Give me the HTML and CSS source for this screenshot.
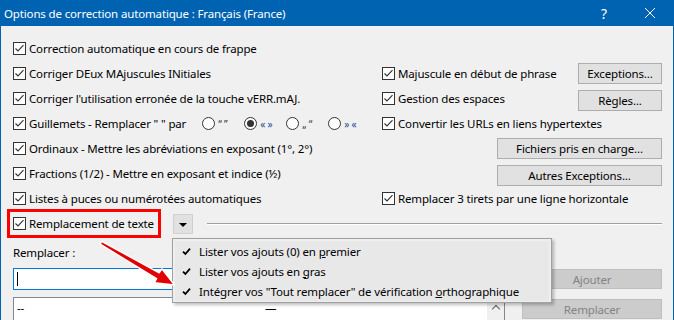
FILE: index.html
```html
<!DOCTYPE html>
<html lang="fr">

<head>
    <meta charset="UTF-8">
    <meta name="viewport" content="width=device-width, initial-scale=1.0">

    <title>Options de correction automatique</title>

    <link rel="stylesheet" href="styles.css">
</head>

<body>

    <svg class="defs" width="0" height="0">
        <symbol id="chk" viewBox="0 0 13 13">
            <rect x="0.5" y="0.5" width="12" height="12" fill="#fff" stroke="#333"/>
            <path d="M2.5 6.5 L5 9 L10.5 3.2" fill="none" stroke="#333" stroke-width="1.1"/>
        </symbol>
        <symbol id="radio" viewBox="0 0 13 13">
            <circle cx="6.5" cy="6.5" r="6" fill="#fff" stroke="#333"/>
        </symbol>
        <symbol id="radio-on" viewBox="0 0 13 13">
            <circle cx="6.5" cy="6.5" r="6" fill="#fff" stroke="#333"/>
            <circle cx="6.5" cy="6.5" r="3.5" fill="#333"/>
        </symbol>
        <symbol id="tick" viewBox="0 0 9 9">
            <path d="M1 4.6 L3.4 7 L8 1.6" fill="none" stroke="#000" stroke-width="1.8"/>
        </symbol>
    </svg>

    <div class="dialog">
        <div class="titlebar">
            <span class="title">Options de correction automatique : Français (France)</span>
            <span class="tb-btn help">?</span>
            <span class="tb-btn">
                <svg width="10" height="10" viewBox="0 0 10 10"><path d="M0 0 L10 10 M10 0 L0 10" stroke="#fff" stroke-width="1"/></svg>
            </span>
        </div>

        <div class="content">
            <div class="options">
                <label class="opt"><svg class="cb"><use href="#chk"/></svg>Correction automatique en cours de frappe</label>
                <div></div>

                <label class="opt"><svg class="cb"><use href="#chk"/></svg>Corriger DEux MAjuscules INitiales</label>
                <div class="opt-row">
                    <label class="opt"><svg class="cb"><use href="#chk"/></svg>Majuscule en début de phrase</label>
                    <button class="btn small">Exceptions...</button>
                </div>

                <label class="opt"><svg class="cb"><use href="#chk"/></svg>Corriger l'utilisation erronée de la touche vERR.mAJ.</label>
                <div class="opt-row">
                    <label class="opt"><svg class="cb"><use href="#chk"/></svg>Gestion des espaces</label>
                    <button class="btn small low">Règles...</button>
                </div>

                <div class="opt">
                    <svg class="cb"><use href="#chk"/></svg><span>Guillemets - Remplacer " " par</span>
                    <div class="quotes">
                        <span class="radio"><svg class="rb"><use href="#radio"/></svg><span class="q">“ ”</span></span>
                        <span class="radio"><svg class="rb"><use href="#radio-on"/></svg><span class="q sel">« »</span></span>
                        <span class="radio"><svg class="rb"><use href="#radio"/></svg><span class="q">„ “</span></span>
                        <span class="radio"><svg class="rb"><use href="#radio"/></svg><span class="q sel">» «</span></span>
                    </div>
                </div>
                <label class="opt"><svg class="cb"><use href="#chk"/></svg>Convertir les URLs en liens hypertextes</label>

                <label class="opt"><svg class="cb"><use href="#chk"/></svg>Ordinaux - Mettre les abréviations en exposant (1°, 2°)</label>
                <div class="opt-row end">
                    <button class="btn wide">Fichiers pris en charge...</button>
                </div>

                <label class="opt"><svg class="cb"><use href="#chk"/></svg>Fractions (1/2) - Mettre en exposant et indice (½)</label>
                <div class="opt-row end">
                    <button class="btn wide low">Autres Exceptions...</button>
                </div>

                <label class="opt"><svg class="cb"><use href="#chk"/></svg>Listes à puces ou numérotées automatiques</label>
                <label class="opt"><svg class="cb"><use href="#chk"/></svg>Remplacer 3 tirets par une ligne horizontale</label>

                <div class="replace-head">
                    <label class="opt highlight"><svg class="cb"><use href="#chk"/></svg>Remplacement de texte</label>
                    <span class="drop"><span class="caret"></span></span>
                    <span class="rule"></span>
                </div>
            </div>

            <div class="replace">
                <div class="replace-left">
                    <div class="replace-label">Remplacer :</div>
                    <div class="field"><span class="cursor"></span></div>
                    <div class="list">
                        <div class="list-rows">
                            <div class="list-row"><span class="col-a">--</span><span class="col-b">—</span></div>
                        </div>
                        <div class="scrollbar"><span class="up"></span></div>
                    </div>
                </div>
                <div class="replace-buttons">
                    <button class="btn off">Ajouter</button>
                    <button class="btn off">Remplacer</button>
                </div>
            </div>
        </div>

        <div class="menu">
            <div class="menu-item"><span class="tick-col"><svg class="tick"><use href="#tick"/></svg></span><span>Lister vos ajouts (0) en <u>p</u>remier</span></div>
            <div class="menu-item"><span class="tick-col"><svg class="tick"><use href="#tick"/></svg></span><span>Lister vos ajouts en <u>g</u>ras</span></div>
            <div class="menu-item"><span class="tick-col"><svg class="tick"><use href="#tick"/></svg></span><span>Intégrer vos "Tout remplacer" de vérification <u>o</u>rthographique</span></div>
        </div>

        <svg class="arrow" width="674" height="320" viewBox="0 0 674 320">
            <polygon points="100.6,241.4 158.2,272.8 160.9,268.8 173.5,285 153.3,282.8 155.6,278.6 99.2,244.2"
                fill="#e30000" stroke="#fff" stroke-width="1.4" stroke-linejoin="round"/>
        </svg>
    </div>

</body>

</html>
```

FILE: styles.css
```css
body {
    margin: 0;
    padding: 0;
    font-family: 'Noto Sans', sans-serif;
    font-size: 11.5px;
    letter-spacing: -0.15px;
    color: #000;
    background-color: #f0f0f0;
}

.defs {
    position: absolute;
}

.dialog {
    position: relative;
    width: 674px;
    height: 320px;
    box-sizing: border-box;
    border-left: 1px solid #0063b1;
    border-right: 1px solid #0063b1;
    background-color: #f0f0f0;
    overflow: hidden;
}

.titlebar {
    height: 26px;
    background-color: #0063b1;
    color: #fff;
    display: flex;
    align-items: center;
}

.title {
    flex: 1;
    padding-left: 3px;
}

.tb-btn {
    width: 46px;
    height: 26px;
    display: flex;
    align-items: center;
    justify-content: center;
}

.help {
    font-size: 14px;
}

.content {
    padding: 10px 11px 0 12px;
}

.options {
    display: grid;
    grid-template-columns: 369px 280px;
    grid-auto-rows: 25px;
    align-items: center;
}

.opt {
    display: flex;
    align-items: center;
    white-space: nowrap;
}

.cb {
    width: 13px;
    height: 13px;
    margin-right: 3px;
    flex-shrink: 0;
}

.opt-row {
    display: flex;
    align-items: center;
    justify-content: space-between;
}

.opt-row.end {
    justify-content: flex-end;
}

.quotes {
    display: flex;
    margin-left: 16px;
}

.radio {
    display: flex;
    align-items: center;
    width: 42px;
}

.rb {
    width: 13px;
    height: 13px;
    margin-right: 3px;
}

.q {
    font-size: 10px;
    color: #333;
}

.q.sel {
    color: #1f4f8f;
}

.btn {
    font-family: 'Noto Sans', sans-serif;
    font-size: 11.5px;
    letter-spacing: -0.15px;
    color: #000;
    background-color: #e1e1e1;
    border: 1px solid #adadad;
    height: 21px;
    padding: 0;
    box-sizing: border-box;
}

.btn.small {
    width: 84px;
}

.btn.wide {
    width: 165px;
}

.btn.low {
    margin-top: 3px;
}

.btn.off {
    width: 140px;
    height: 20px;
    color: #838383;
    background-color: #cccccc;
    border-color: #bfbfbf;
}

.replace-head {
    grid-column: 1 / -1;
    display: flex;
    align-items: center;
}

.highlight {
    height: 29px;
    box-sizing: border-box;
    border: 3px solid #ff0000;
    margin-left: -6px;
    padding: 0 4px 0 3px;
}

.drop {
    width: 20px;
    height: 20px;
    margin-left: 12px;
    box-sizing: border-box;
    background-color: #e1e1e1;
    border: 1px solid #d0d0d0;
    display: flex;
    align-items: center;
    justify-content: center;
}

.caret {
    width: 0;
    height: 0;
    border-left: 4px solid transparent;
    border-right: 4px solid transparent;
    border-top: 4px solid #000;
    margin-top: 2px;
}

.rule {
    flex: 1;
    margin-left: 14px;
    border-top: 1px solid #a0a0a0;
    border-bottom: 1px solid #fff;
}

.replace {
    display: flex;
    gap: 17px;
    margin-top: 9px;
}

.replace-left {
    width: 492px;
}

.replace-label {
    height: 16px;
    line-height: 16px;
}

.field {
    margin-top: 7px;
    width: 300px;
    height: 22px;
    box-sizing: border-box;
    border: 1px solid #0078d7;
    background-color: #fff;
    display: flex;
    align-items: center;
    padding-left: 3px;
}

.cursor {
    width: 1px;
    height: 14px;
    background-color: #000;
}

.list {
    margin-top: 7px;
    height: 40px;
    box-sizing: border-box;
    border: 1px solid #828790;
    background-color: #fff;
    display: flex;
}

.list-rows {
    flex: 1;
}

.list-row {
    display: flex;
    height: 18px;
    align-items: center;
    padding-left: 3px;
}

.col-a {
    width: 248px;
}

.scrollbar {
    width: 17px;
    background-color: #f0f0f0;
    display: flex;
    justify-content: center;
    padding-top: 8px;
    box-sizing: border-box;
}

.up {
    width: 5px;
    height: 5px;
    border-left: 1.5px solid #606060;
    border-top: 1.5px solid #606060;
    transform: rotate(45deg);
}

.replace-buttons {
    width: 140px;
    padding-top: 24px;
    display: flex;
    flex-direction: column;
    gap: 10px;
}

.menu {
    position: absolute;
    left: 171px;
    top: 238px;
    width: 380px;
    height: 65px;
    box-sizing: border-box;
    padding: 2px 2px 1px 2px;
    background-color: #eeeeee;
    border: 1px solid #a0a0a0;
    box-shadow: 2px 2px 3px rgba(0, 0, 0, 0.25);
}

.menu-item {
    height: 20px;
    display: flex;
    align-items: center;
    white-space: nowrap;
    background-color: #e8e8e8;
}

.tick-col {
    width: 24px;
    display: flex;
    align-items: center;
    padding-left: 7px;
    box-sizing: border-box;
}

.tick {
    width: 9px;
    height: 9px;
}

.arrow {
    position: absolute;
    left: 0;
    top: 0;
    pointer-events: none;
}
```
